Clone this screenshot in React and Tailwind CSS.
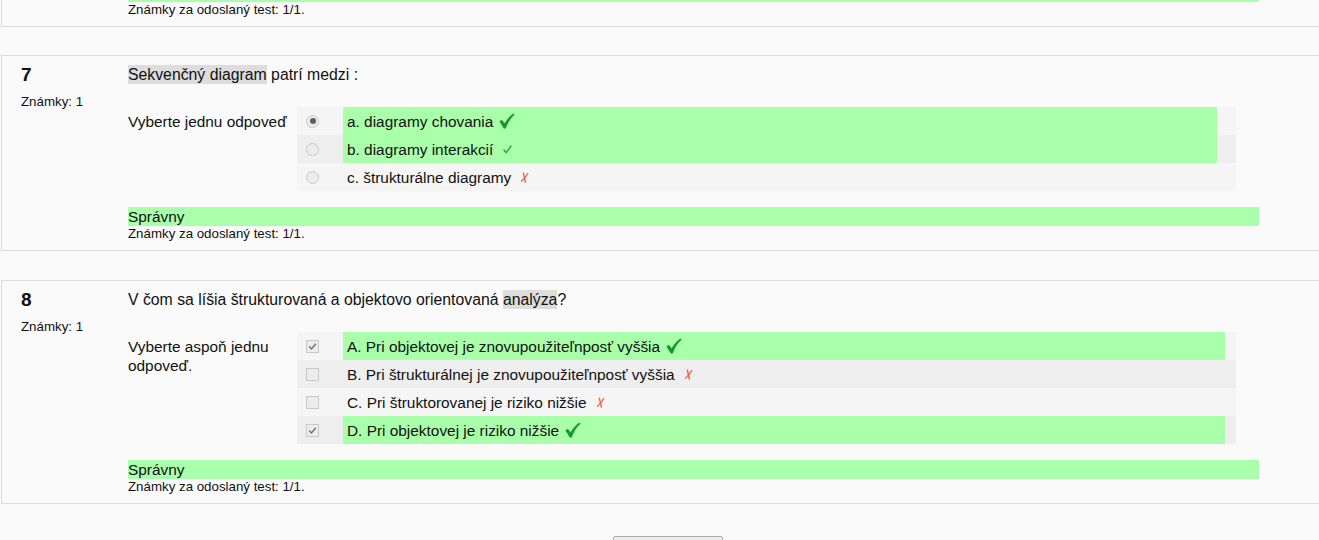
import React from "react";

const font = { fontFamily: '"Liberation Sans", Arial, sans-serif' };

function BigCheck() {
  return (
    <svg width="16" height="16" viewBox="0 0 16 16" className="ml-[6px] inline-block">
      <path d="M0.4 8.4 L2.8 6.8 L5.6 10.2 C8 6.2 10.8 2.8 14.4 0.4 L15.6 1.8 C12 4.8 9 9.2 6.8 15.4 L4.8 15.6 Z" fill="#159a2e" />
    </svg>
  );
}

function SmallCheck() {
  return (
    <svg width="9" height="9" viewBox="0 0 9 9" className="ml-[10px] inline-block">
      <path d="M1 5 L3.2 7.6 L8 1" stroke="#1ea53a" strokeWidth="1.3" fill="none" strokeLinecap="round" />
    </svg>
  );
}

function Cross() {
  return (
    <svg width="9" height="11" viewBox="0 0 9 11" className="ml-[9px] inline-block">
      <path d="M3.4 1.2 C4 4 4.6 7 5.4 10" stroke="#f2603d" strokeWidth="1.4" fill="none" strokeLinecap="round" />
      <path d="M7.8 1.6 C6 4.4 4 7 1.4 9.4" stroke="#f2603d" strokeWidth="1.2" fill="none" strokeLinecap="round" />
    </svg>
  );
}

function Radio({ checked }) {
  return (
    <div className="w-[13px] h-[13px] rounded-full border border-[#c9c9c9] bg-[#ececec] flex items-center justify-center">
      {checked && <div className="w-[6px] h-[6px] rounded-full bg-[#606060]" />}
    </div>
  );
}

function Checkbox({ checked }) {
  return (
    <div className="w-[13px] h-[13px] border border-[#c9c9c9] bg-[#ececec] flex items-center justify-center">
      {checked && (
        <svg width="9" height="9" viewBox="0 0 9 9">
          <path d="M1.2 4.6 L3.5 7 L7.8 1.8" stroke="#707070" strokeWidth="1.4" fill="none" />
        </svg>
      )}
    </div>
  );
}

function Answer({ kind, checked, text, mark, green, greenWidth, shade }) {
  return (
    <div className={`flex h-[28px] ${shade ? "bg-[#eeeeee]" : "bg-[#f5f5f5]"}`}>
      <div className="w-[46px] pl-[9px] flex items-center">
        {kind === "radio" ? <Radio checked={checked} /> : <Checkbox checked={checked} />}
      </div>
      <div
        className={`flex items-center pl-[4px] text-[15.4px] leading-[19px] ${green ? "bg-[#aaffaa]" : ""}`}
        style={{ width: greenWidth }}
      >
        <span>{text}</span>
        {mark === "big" && <BigCheck />}
        {mark === "small" && <SmallCheck />}
        {mark === "cross" && <Cross />}
      </div>
      <div className="flex-1" />
    </div>
  );
}

function Question({ num, title, prompt, kind, answers, greenWidth, className }) {
  return (
    <div className={`ml-px w-[1334px] border border-[#dddddd] flex pl-[19px] pt-2 pb-2 ${className}`}>
      <div className="w-[107px]">
        <div className="text-[19px] leading-[22px] font-bold">{num}</div>
        <div className="mt-2 text-[13.3px] leading-[16px]">Známky: 1</div>
      </div>
      <div className="w-[1131px]">
        <div className="pt-px text-[15.8px] leading-[19px]">{title}</div>
        <div className="mt-[23px] flex">
          <div className="w-[169px] pt-[5px] text-[15.4px] leading-[19px]">{prompt}</div>
          <div className="w-[939px]">
            {answers.map((a, i) => (
              <Answer key={i} kind={kind} shade={i % 2 === 1} greenWidth={greenWidth} {...a} />
            ))}
          </div>
        </div>
        <div className="mt-4 h-[19px] bg-[#aaffaa] text-[15.4px] leading-[19px]">Správny</div>
        <div className="text-[13.3px] leading-[16px]">Známky za odoslaný test: 1/1.</div>
      </div>
    </div>
  );
}

export default function App() {
  return (
    <div className="w-full h-[540px] overflow-hidden bg-[#fafafa] text-[#111]" style={font}>
      <div className="w-[1335px]">
        <div className="ml-px w-[1334px] border-x border-b border-[#dddddd] pl-[126px] pb-2">
          <div className="h-[2px] w-[1131px] bg-[#aaffaa]" />
          <div className="text-[13.3px] leading-[16px]">Známky za odoslaný test: 1/1.</div>
        </div>

        <Question
          className="mt-[28px]"
          num="7"
          title={
            <>
              <span className="bg-[#dddddd] py-px">Sekvenčný diagram</span> patrí medzi :
            </>
          }
          prompt="Vyberte jednu odpoveď"
          kind="radio"
          greenWidth="874px"
          answers={[
            { checked: true, text: "a. diagramy chovania", mark: "big", green: true },
            { checked: false, text: "b. diagramy interakcií", mark: "small", green: true },
            { checked: false, text: "c. štrukturálne diagramy", mark: "cross", green: false },
          ]}
        />

        <Question
          className="mt-[29px]"
          num="8"
          title={
            <>
              V čom sa líšia štrukturovaná a objektovo orientovaná{" "}
              <span className="bg-[#dddddd] py-px">analýza</span>?
            </>
          }
          prompt="Vyberte aspoň jednu odpoveď."
          kind="check"
          greenWidth="882px"
          answers={[
            { checked: true, text: "A. Pri objektovej je znovupoužiteľnposť vyššia", mark: "big", green: true },
            { checked: false, text: "B. Pri štrukturálnej je znovupoužiteľnposť vyššia", mark: "cross", green: false },
            { checked: false, text: "C. Pri štruktorovanej je riziko nižšie", mark: "cross", green: false },
            { checked: true, text: "D. Pri objektovej je riziko nižšie", mark: "big", green: true },
          ]}
        />

        <div className="mt-[32px] mx-auto w-[110px] h-[28px] border border-[#aaaaaa] bg-[#eeeeee] rounded-[2px]" />
      </div>
    </div>
  );
}
